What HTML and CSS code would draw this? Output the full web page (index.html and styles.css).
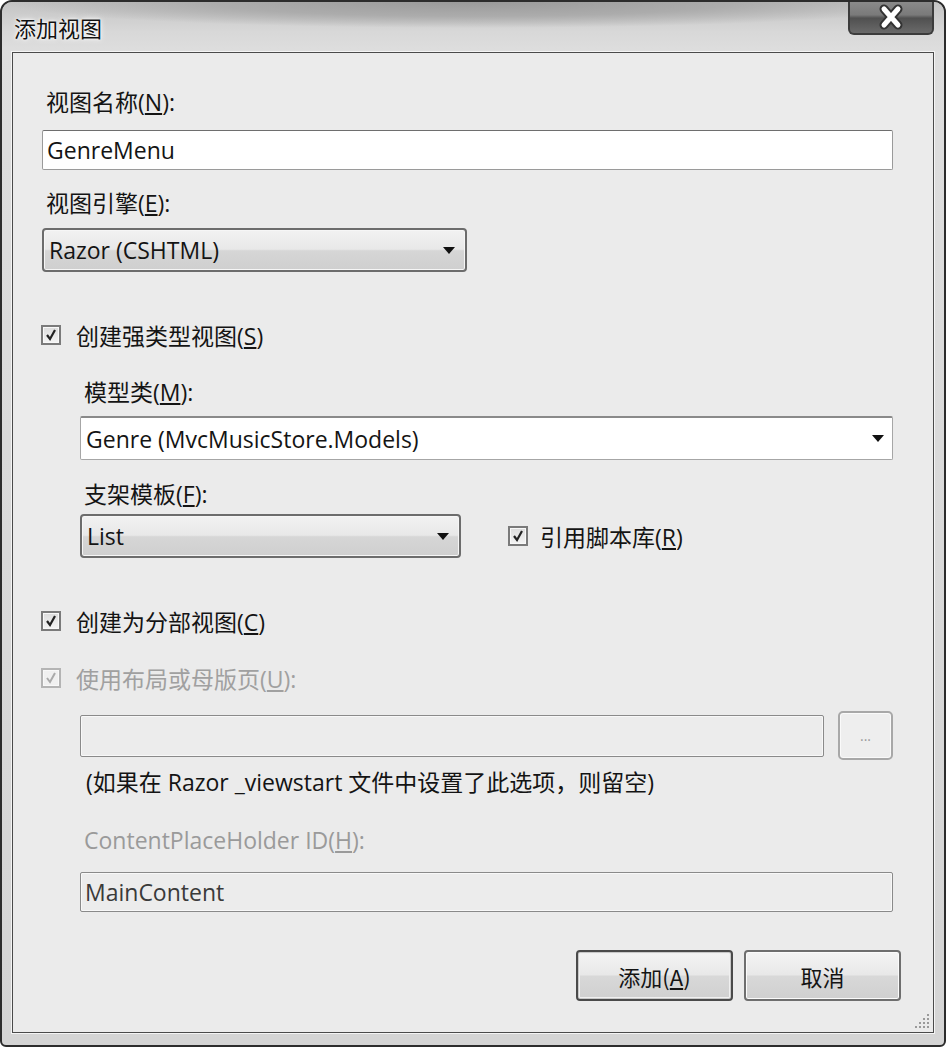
FILE: index.html
```html
<!DOCTYPE html>
<html lang="zh-CN">
<head>
<meta charset="utf-8">
<title>添加视图</title>
<link rel="stylesheet" href="styles.css">
</head>
<body>
<div class="window">
  <div class="titlebar">
    <div class="title">添加视图</div>
    <div class="close">
      <svg width="40" height="26" viewBox="0 0 40 26">
        <path d="M13 5 L27 21 M27 5 L13 21" stroke="#333333" stroke-width="9" stroke-linecap="round"/>
        <path d="M13 5 L27 21 M27 5 L13 21" stroke="#ffffff" stroke-width="5" stroke-linecap="round"/>
      </svg>
    </div>
  </div>
  <div class="client">
    <div class="label first">视图名称(<u>N</u>):</div>
    <div class="input white t16">GenreMenu</div>
    <div class="label t21">视图引擎(<u>E</u>):</div>
    <div class="select engine t13"><span>Razor (CSHTML)</span><span class="arrow"></span></div>

    <div class="check-row t51">
      <span class="box"><svg width="14" height="14" viewBox="0 0 14 14"><path d="M3 7 L6 11 L11 2" fill="none" stroke="#222" stroke-width="2.2"/></svg></span>
      <span>创建强类型视图(<u>S</u>)</span>
    </div>

    <div class="indent">
      <div class="label t33">模型类(<u>M</u>):</div>
      <div class="combo t12"><span>Genre (MvcMusicStore.Models)</span><span class="arrow"></span></div>
      <div class="label t22">支架模板(<u>F</u>):</div>
      <div class="template-row t8">
        <div class="select list"><span>List</span><span class="arrow"></span></div>
        <div class="check-row">
          <span class="box"><svg width="14" height="14" viewBox="0 0 14 14"><path d="M3 7 L6 11 L11 2" fill="none" stroke="#222" stroke-width="2.2"/></svg></span>
          <span>引用脚本库(<u>R</u>)</span>
        </div>
      </div>
    </div>

    <div class="check-row t51">
      <span class="box"><svg width="14" height="14" viewBox="0 0 14 14"><path d="M3 7 L6 11 L11 2" fill="none" stroke="#222" stroke-width="2.2"/></svg></span>
      <span>创建为分部视图(<u>C</u>)</span>
    </div>
    <div class="check-row disabled t33">
      <span class="box"><svg width="14" height="14" viewBox="0 0 14 14"><path d="M3 7 L6 11 L11 2" fill="none" stroke="#aaa" stroke-width="2"/></svg></span>
      <span>使用布局或母版页(<u>U</u>):</span>
    </div>

    <div class="indent">
      <div class="layout-row t21">
        <div class="input disabled-input path"></div>
        <div class="browse">...</div>
      </div>
      <div class="note t10">(如果在 Razor _viewstart 文件中设置了此选项，则留空)</div>
      <div class="label gray t34">ContentPlaceHolder ID(<u>H</u>):</div>
      <div class="input disabled-input main t20">MainContent</div>
    </div>

    <div class="buttons">
      <div class="btn default">添加(<u>A</u>)</div>
      <div class="btn">取消</div>
    </div>

    <svg class="grip" width="18" height="18" viewBox="0 0 18 18">
      <g fill="#9a9a9a">
        <rect x="14" y="2" width="2" height="2"/>
        <rect x="10" y="6" width="2" height="2"/><rect x="14" y="6" width="2" height="2"/>
        <rect x="6" y="10" width="2" height="2"/><rect x="10" y="10" width="2" height="2"/><rect x="14" y="10" width="2" height="2"/>
        <rect x="2" y="14" width="2" height="2"/><rect x="6" y="14" width="2" height="2"/><rect x="10" y="14" width="2" height="2"/><rect x="14" y="14" width="2" height="2"/>
      </g>
    </svg>
  </div>
</div>
</body>
</html>
```
FILE: styles.css
```css
html, body {
  margin: 0;
  padding: 0;
  background: #ffffff;
}
body {
  font-family: "Open Sans", "Noto Sans CJK SC", sans-serif;
  font-size: 23px;
  color: #141414;
}
.window {
  box-sizing: border-box;
  width: 946px;
  height: 1047px;
  border: 2px solid #2c2c2c;
  border-radius: 12px 12px 6px 6px;
  background: linear-gradient(180deg, #cfcfcf 0px, #dedede 40px, #d4d4d4 100%);
  display: flex;
  flex-direction: column;
  overflow: hidden;
}
.titlebar {
  height: 50px;
  flex: none;
  display: flex;
  justify-content: space-between;
  align-items: flex-start;
  background:
    radial-gradient(ellipse 470px 26px at 50% 0px, #9a9a9a 0%, #acacac 55%, rgba(220,220,220,0) 100%),
    linear-gradient(180deg, #c4c4c4 0%, #d8d8d8 60%, #dedede 100%);
}
.title {
  font-family: "Noto Sans CJK SC", sans-serif;
  font-size: 22px;
  margin: 9px 0 0 12px;
  color: #111;
  text-shadow: 0 0 6px #ffffff, 0 0 3px #ffffff, 0 0 1px #ffffff;
}
.close {
  width: 86px;
  height: 35px;
  margin-right: 10px;
  margin-top: -2px;
  box-sizing: border-box;
  border: 2px solid #3c3c3c;
  border-top: none;
  border-radius: 0 0 6px 6px;
  background: linear-gradient(180deg, #8c8c8c 0%, #7a7a7a 45%, #505050 55%, #6a6a6a 100%);
  display: flex;
  align-items: center;
  justify-content: center;
}
.client {
  position: relative;
  flex: 1;
  margin: 0 10px 12px 10px;
  border: 1px solid #4a4a4a;
  box-shadow: 0 0 0 1px #f4f4f4;
  background: #ebebeb;
  padding: 0 40px 0 29px;
}
.label {
  margin-left: 4px;
  height: 24px;
  line-height: 24px;
  white-space: nowrap;
}
.label.first { margin-top: 37px; }
.label.gray { color: #9a9a9a; }
.t8 { margin-top: 8px; }
.t10 { margin-top: 10px; }
.t12 { margin-top: 12px; }
.t13 { margin-top: 13px; }
.t16 { margin-top: 16px; }
.t20 { margin-top: 20px; }
.t21 { margin-top: 21px; }
.t22 { margin-top: 22px; }
.t33 { margin-top: 33px; }
.t34 { margin-top: 34px; }
.t51 { margin-top: 51px; }

.input {
  box-sizing: border-box;
  height: 40px;
  line-height: 38px;
  padding-left: 4px;
  border: 1px solid #9a9a9a;
  border-top-color: #6e6e6e;
  border-radius: 2px;
}
.input.white { background: #ffffff; }
.disabled-input {
  background: #ececec;
  border-color: #8a8a8a;
  box-shadow: inset 0 0 0 1px #f8f8f8;
  color: #3a3a3a;
}
.select {
  box-sizing: border-box;
  height: 44px;
  border: 2px solid #6c6c6c;
  border-radius: 4px;
  box-shadow: inset 0 0 0 1px #f6f6f6;
  background: linear-gradient(180deg, #f2f2f2 0%, #e8e8e8 48%, #d6d6d6 52%, #cfcfcf 100%);
  display: flex;
  align-items: center;
  justify-content: space-between;
  padding: 0 10px 0 5px;
}
.select.engine { width: 425px; }
.select.list { width: 381px; flex: none; }
.arrow {
  width: 0;
  height: 0;
  border-left: 6px solid transparent;
  border-right: 6px solid transparent;
  border-top: 7px solid #111;
}
.combo {
  box-sizing: border-box;
  height: 44px;
  background: #ffffff;
  border: 1px solid #a6a6a6;
  border-top: 2px solid #8a8a8a;
  border-radius: 2px;
  display: flex;
  align-items: center;
  justify-content: space-between;
  padding: 0 8px 0 5px;
}
.check-row {
  display: flex;
  align-items: center;
  gap: 15px;
  height: 24px;
  white-space: nowrap;
}
.check-row.disabled { color: #a0a0a0; }
.box {
  box-sizing: border-box;
  width: 20px;
  height: 20px;
  border: 2px solid #7a7a7a;
  background: linear-gradient(180deg, #dcdcdc 0%, #f4f4f4 100%);
  box-shadow: inset 0 0 0 1px #f8f8f8;
  display: flex;
  align-items: center;
  justify-content: center;
  margin-left: -1px;
}
.check-row.disabled .box { border-color: #b4b4b4; background: #f0f0f0; }
.indent { margin-left: 38px; }
.template-row {
  display: flex;
  align-items: center;
  gap: 47px;
}
.template-row .box { margin-left: 0; }
.template-row .check-row { gap: 12px; }
.layout-row {
  display: flex;
  align-items: center;
  gap: 14px;
  height: 49px;
}
.input.path { flex: 1; height: 42px; }
.browse {
  box-sizing: border-box;
  width: 55px;
  height: 49px;
  border: 2px solid #a8a8a8;
  border-radius: 5px;
  background: #eeeeee;
  box-shadow: inset 0 0 0 1px #fafafa;
  color: #9a9a9a;
  font-size: 14px;
  display: flex;
  align-items: center;
  justify-content: center;
}
.note {
  margin-left: 6px;
  height: 24px;
  line-height: 24px;
  white-space: nowrap;
}
.buttons {
  display: flex;
  justify-content: flex-end;
  gap: 11px;
  margin-top: 38px;
  margin-right: -8px;
}
.btn {
  box-sizing: border-box;
  width: 157px;
  height: 51px;
  border: 2px solid #6e6e6e;
  border-radius: 4px;
  background: linear-gradient(180deg, #f4f4f4 0%, #e8e8e8 48%, #d8d8d8 52%, #d0d0d0 100%);
  box-shadow: inset 0 0 0 1px #fbfbfb;
  display: flex;
  align-items: center;
  justify-content: center;
  font-family: "Noto Sans CJK SC", sans-serif;
  font-size: 22px;
}
.btn.default {
  border-color: #4a4a4a;
  box-shadow: inset 0 0 0 1px #c8c8c8, inset 0 0 0 2px #f0f0f0;
}
.grip {
  position: absolute;
  right: 2px;
  bottom: 2px;
}
```
